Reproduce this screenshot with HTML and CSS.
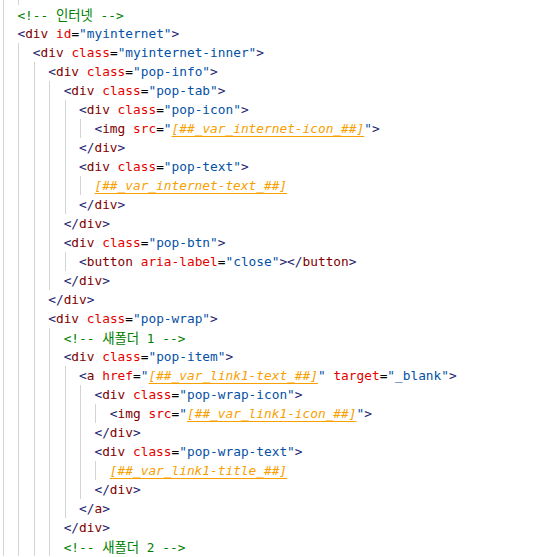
FILE: index.html
```html
<!DOCTYPE html>
<html lang="ko">
<head>
<meta charset="utf-8">
<title>code</title>
<link rel="stylesheet" href="styles.css">
</head>
<body>
<div class="code">
<div class="ln l2"></div>
<div class="ln l1"><span class="c">&lt;!-- <span class="ko">인터넷</span> --&gt;</span></div>
<div class="ln l1"><span class="p">&lt;</span><span class="t">div</span> <span class="a">id</span><span class="e">=</span><span class="s">"myinternet"</span><span class="p">&gt;</span></div>
<div class="ln l2"><span class="p">&lt;</span><span class="t">div</span> <span class="a">class</span><span class="e">=</span><span class="s">"myinternet-inner"</span><span class="p">&gt;</span></div>
<div class="ln l3"><span class="p">&lt;</span><span class="t">div</span> <span class="a">class</span><span class="e">=</span><span class="s">"pop-info"</span><span class="p">&gt;</span></div>
<div class="ln l4"><span class="p">&lt;</span><span class="t">div</span> <span class="a">class</span><span class="e">=</span><span class="s">"pop-tab"</span><span class="p">&gt;</span></div>
<div class="ln l5"><span class="p">&lt;</span><span class="t">div</span> <span class="a">class</span><span class="e">=</span><span class="s">"pop-icon"</span><span class="p">&gt;</span></div>
<div class="ln l6"><span class="p">&lt;</span><span class="t">img</span> <span class="a">src</span><span class="e">=</span><span class="s">"</span><span class="v">[##_var_internet-icon_##]</span><span class="s">"</span><span class="p">&gt;</span></div>
<div class="ln l5"><span class="p">&lt;/</span><span class="t">div</span><span class="p">&gt;</span></div>
<div class="ln l5"><span class="p">&lt;</span><span class="t">div</span> <span class="a">class</span><span class="e">=</span><span class="s">"pop-text"</span><span class="p">&gt;</span></div>
<div class="ln l6"><span class="v">[##_var_internet-text_##]</span></div>
<div class="ln l5"><span class="p">&lt;/</span><span class="t">div</span><span class="p">&gt;</span></div>
<div class="ln l4"><span class="p">&lt;/</span><span class="t">div</span><span class="p">&gt;</span></div>
<div class="ln l4"><span class="p">&lt;</span><span class="t">div</span> <span class="a">class</span><span class="e">=</span><span class="s">"pop-btn"</span><span class="p">&gt;</span></div>
<div class="ln l5"><span class="p">&lt;</span><span class="t">button</span> <span class="a">aria-label</span><span class="e">=</span><span class="s">"close"</span><span class="p">&gt;&lt;/</span><span class="t">button</span><span class="p">&gt;</span></div>
<div class="ln l4"><span class="p">&lt;/</span><span class="t">div</span><span class="p">&gt;</span></div>
<div class="ln l3"><span class="p">&lt;/</span><span class="t">div</span><span class="p">&gt;</span></div>
<div class="ln l3"><span class="p">&lt;</span><span class="t">div</span> <span class="a">class</span><span class="e">=</span><span class="s">"pop-wrap"</span><span class="p">&gt;</span></div>
<div class="ln l4"><span class="c">&lt;!-- <span class="ko">새폴더</span> 1 --&gt;</span></div>
<div class="ln l4"><span class="p">&lt;</span><span class="t">div</span> <span class="a">class</span><span class="e">=</span><span class="s">"pop-item"</span><span class="p">&gt;</span></div>
<div class="ln l5"><span class="p">&lt;</span><span class="t">a</span> <span class="a">href</span><span class="e">=</span><span class="s">"</span><span class="v">[##_var_link1-text_##]</span><span class="s">"</span> <span class="a">target</span><span class="e">=</span><span class="s">"_blank"</span><span class="p">&gt;</span></div>
<div class="ln l6"><span class="p">&lt;</span><span class="t">div</span> <span class="a">class</span><span class="e">=</span><span class="s">"pop-wrap-icon"</span><span class="p">&gt;</span></div>
<div class="ln l7"><span class="p">&lt;</span><span class="t">img</span> <span class="a">src</span><span class="e">=</span><span class="s">"</span><span class="v">[##_var_link1-icon_##]</span><span class="s">"</span><span class="p">&gt;</span></div>
<div class="ln l6"><span class="p">&lt;/</span><span class="t">div</span><span class="p">&gt;</span></div>
<div class="ln l6"><span class="p">&lt;</span><span class="t">div</span> <span class="a">class</span><span class="e">=</span><span class="s">"pop-wrap-text"</span><span class="p">&gt;</span></div>
<div class="ln l7"><span class="v">[##_var_link1-title_##]</span></div>
<div class="ln l6"><span class="p">&lt;/</span><span class="t">div</span><span class="p">&gt;</span></div>
<div class="ln l5"><span class="p">&lt;/</span><span class="t">a</span><span class="p">&gt;</span></div>
<div class="ln l4"><span class="p">&lt;/</span><span class="t">div</span><span class="p">&gt;</span></div>
<div class="ln l4"><span class="c">&lt;!-- <span class="ko">새폴더</span> 2 --&gt;</span></div>
</div>
</body>
</html>
```
FILE: styles.css
```css
html, body {
  margin: 0;
  padding: 0;
  background: #ffffff;
  overflow: hidden;
}

.code {
  margin-top: -14px;
  padding-left: 2px;
  font-family: "DejaVu Sans Mono", "Noto Sans CJK KR", monospace;
  font-size: 12.8px;
  line-height: 19px;
  color: #000000;
}

.ln {
  height: 19px;
  white-space: pre;
  background-image: repeating-linear-gradient(to right, transparent 0 1px, #d3d3d3 1px 2px, transparent 2px 2ch);
  background-repeat: no-repeat;
  background-position: 0 0;
}

.l1 { padding-left: 2ch; background-size: 2ch 100%; }
.l2 { padding-left: 4ch; background-size: 4ch 100%; }
.l3 { padding-left: 6ch; background-size: 6ch 100%; }
.l4 { padding-left: 8ch; background-size: 8ch 100%; }
.l5 { padding-left: 10ch; background-size: 10ch 100%; }
.l6 { padding-left: 12ch; background-size: 12ch 100%; }
.l7 { padding-left: 14ch; background-size: 14ch 100%; }

.p { color: #22226e; }
.t { color: #800000; }
.a { color: #e50000; }
.e { color: #000000; }
.s { color: #0451a5; }
.c { color: #008000; }

.v {
  color: #f7a000;
  font-style: italic;
  text-decoration: underline;
  text-decoration-color: #f7a000;
  text-decoration-thickness: 1px;
  text-underline-offset: 3px;
}

.ko {
  font-family: "Noto Sans CJK KR", sans-serif;
  font-size: 13.4px;
}
```
